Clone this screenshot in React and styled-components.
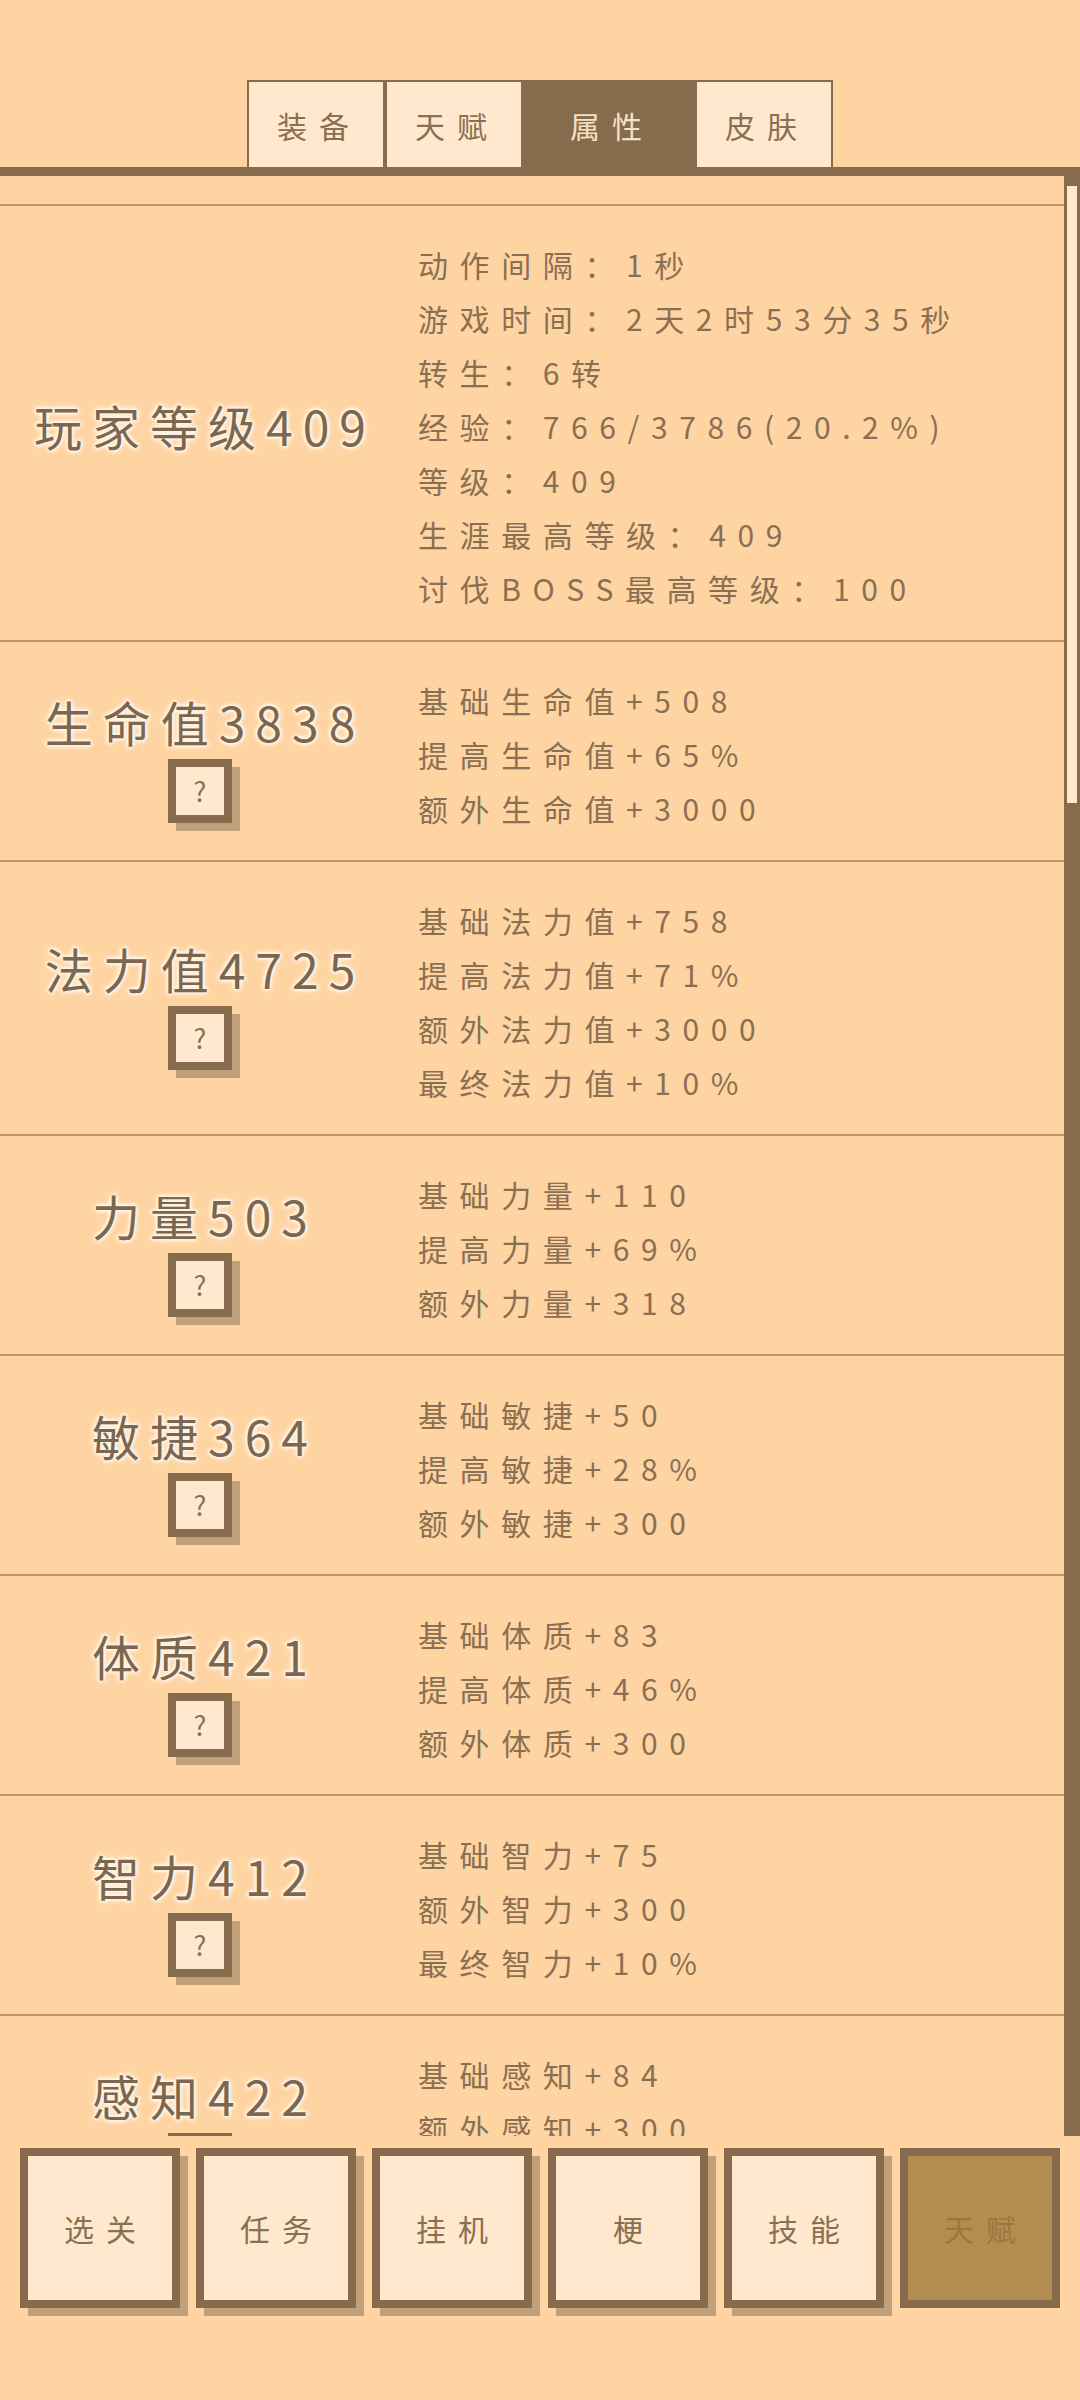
import styled, { createGlobalStyle } from "styled-components"

const GlobalStyle = createGlobalStyle`
    html, body {
        margin: 0;
        padding: 0;
        background: #ffd4a3;
    }
    * {
        box-sizing: border-box;
    }
`

const dark = "#866b4c"
const light = "#ffe8cd"
const textColor = "#8a7052"
const shadow = "#c0a07a"

const Page = styled.div`
    width: 1080px;
    height: 2400px;
    background: #ffd4a3;
    display: flex;
    flex-direction: column;
    font-family: "Noto Sans CJK SC", "Noto Sans", sans-serif;
    overflow: hidden;
`

const TabBar = styled.div`
    display: flex;
    justify-content: center;
    padding-top: 80px;
`

const Tab = styled.div`
    height: 87px;
    display: flex;
    align-items: center;
    padding: ${props => props.active ? "0 39px 0 45px" : "0 22px 0 28px"};
    border: 2px solid ${dark};
    border-bottom: none;
    background: ${props => props.active ? dark : light};
    color: ${props => props.active ? "#f7e0c4" : textColor};
    font-size: 30px;
    letter-spacing: 12px;
`

const Panel = styled.div`
    display: flex;
    border-top: 9px solid ${dark};
    height: 1969px;
`

const ScrollArea = styled.div`
    flex: 1;
    overflow: hidden;
    padding-top: 28px;
`

const ScrollTrack = styled.div`
    width: 16px;
    background: ${dark};
    padding: 10px 3px 0 3px;
`

const Thumb = styled.div`
    height: 617px;
    background: ${light};
`

const Row = styled.div`
    display: flex;
    border-top: 2px solid #c4965f;
    padding: 28px 0 25px;
`

const LeftCol = styled.div`
    width: 400px;
    display: flex;
    flex-direction: column;
    align-items: center;
    justify-content: center;
`

const Title = styled.div`
    height: 76px;
    line-height: 76px;
    font-size: 48px;
    letter-spacing: 10px;
    padding-left: 10px;
    color: #7b6750;
    white-space: nowrap;
    text-shadow: 2px 0 3px #fff4e4, -2px 0 3px #fff4e4, 0 2px 3px #fff4e4,
        0 -2px 3px #fff4e4, 0 0 6px #fff0dc;
`

const HelpButton = styled.div`
    width: 64px;
    height: 64px;
    border: 8px solid ${dark};
    background: ${light};
    box-shadow: 8px 8px 0 ${shadow};
    display: flex;
    align-items: center;
    justify-content: center;
    font-size: 27px;
    color: ${textColor};
`

const DescCol = styled.div`
    flex: 1;
    padding: 3px 0 0 18px;
`

const DescLine = styled.div`
    height: 54px;
    line-height: 54px;
    font-size: 30px;
    letter-spacing: 11.6px;
    color: ${textColor};
    white-space: nowrap;
`

const NavBar = styled.div`
    display: flex;
    gap: 16px;
    padding: 0 20px;
    margin-top: 12px;
`

const NavButton = styled.div`
    width: 160px;
    height: 160px;
    border: 8px solid ${dark};
    background: ${props => props.active ? "#b38c50" : light};
    box-shadow: ${props => props.active ? "none" : `8px 8px 0 ${shadow}`};
    color: ${props => props.active ? "#9a7640" : textColor};
    display: flex;
    align-items: center;
    justify-content: center;
    font-size: 30px;
    letter-spacing: 12px;
    padding-left: 12px;
`

const tabs = ["装备", "天赋", "属性", "皮肤"]

const stats = [
    {
        title: "玩家等级409",
        lines: [
            "动作间隔：1秒",
            "游戏时间：2天2时53分35秒",
            "转生：6转",
            "经验：766/3786(20.2%)",
            "等级：409",
            "生涯最高等级：409",
            "讨伐BOSS最高等级：100",
        ],
    },
    { title: "生命值3838", help: true, lines: ["基础生命值+508", "提高生命值+65%", "额外生命值+3000"] },
    { title: "法力值4725", help: true, lines: ["基础法力值+758", "提高法力值+71%", "额外法力值+3000", "最终法力值+10%"] },
    { title: "力量503", help: true, lines: ["基础力量+110", "提高力量+69%", "额外力量+318"] },
    { title: "敏捷364", help: true, lines: ["基础敏捷+50", "提高敏捷+28%", "额外敏捷+300"] },
    { title: "体质421", help: true, lines: ["基础体质+83", "提高体质+46%", "额外体质+300"] },
    { title: "智力412", help: true, lines: ["基础智力+75", "额外智力+300", "最终智力+10%"] },
    { title: "感知422", help: true, lines: ["基础感知+84", "额外感知+300", "最终感知+10%"] },
]

const navItems = ["选关", "任务", "挂机", "梗", "技能", "天赋"]

const App = () => {
    return (
        <Page>
            <GlobalStyle />
            <TabBar>
                {tabs.map(t => (
                    <Tab key={t} active={t === "属性"}>{t}</Tab>
                ))}
            </TabBar>
            <Panel>
                <ScrollArea>
                    {stats.map(s => (
                        <Row key={s.title}>
                            <LeftCol>
                                <Title>{s.title}</Title>
                                {s.help && <HelpButton>?</HelpButton>}
                            </LeftCol>
                            <DescCol>
                                {s.lines.map(l => (
                                    <DescLine key={l}>{l}</DescLine>
                                ))}
                            </DescCol>
                        </Row>
                    ))}
                </ScrollArea>
                <ScrollTrack>
                    <Thumb />
                </ScrollTrack>
            </Panel>
            <NavBar>
                {navItems.map(n => (
                    <NavButton key={n} active={n === "天赋"}>{n}</NavButton>
                ))}
            </NavBar>
        </Page>
    )
}

export default App
